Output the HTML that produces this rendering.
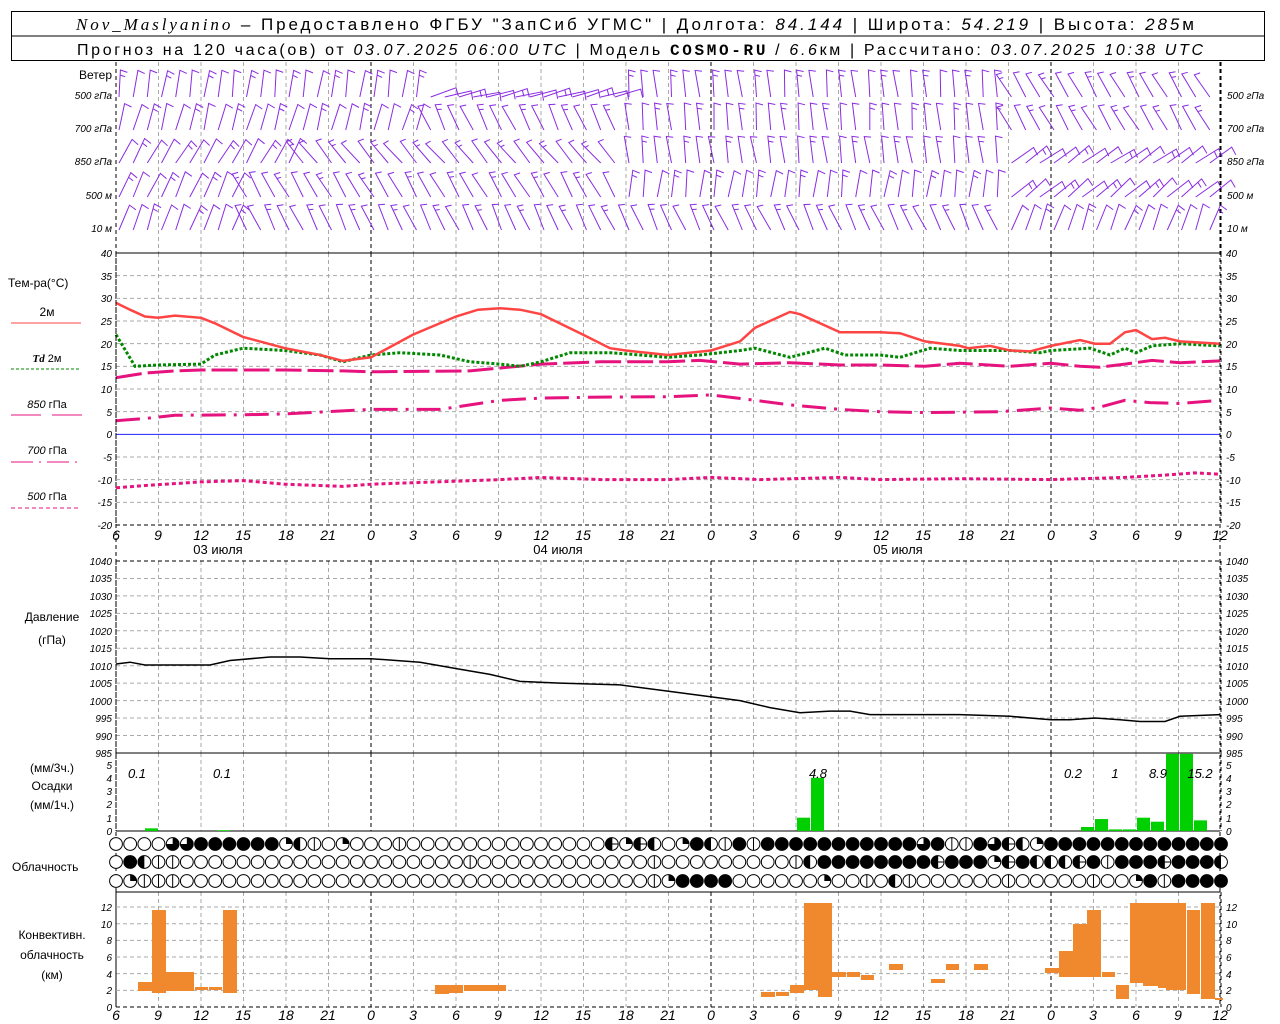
<!DOCTYPE html>
<html><head><meta charset="utf-8">
<style>
html,body{margin:0;padding:0;background:#fff;width:1280px;height:1024px;overflow:hidden}
svg{display:block}
text{font-family:"Liberation Sans",sans-serif;fill:#000}
.ax{font-size:10px;font-style:italic}
.hr{font-size:14px;font-style:italic;text-anchor:middle}
.lb{font-size:12px}
</style></head><body>
<svg id="s" width="1280" height="1024" viewBox="0 0 1280 1024" xmlns="http://www.w3.org/2000/svg">
<rect x="0" y="0" width="1280" height="1024" fill="#fff"/>
<g id="grid"></g>
<g id="plots"></g>
<!-- header -->
<rect x="11.5" y="11.5" width="1253" height="49" fill="none" stroke="#000"/>
<line x1="11" y1="36" x2="1265" y2="36" stroke="#000"/>
<text x="76" y="30" font-size="17" textLength="1118" lengthAdjust="spacing"><tspan font-family="Liberation Serif" font-style="italic">Nov_Maslyanino</tspan> – Предоставлено ФГБУ "ЗапСиб УГМС" | Долгота: <tspan font-style="italic">84.144</tspan> | Широта: <tspan font-style="italic">54.219</tspan> | Высота: <tspan font-style="italic">285</tspan>м</text>
<text x="77" y="55" font-size="16" textLength="1126" lengthAdjust="spacing">Прогноз на 120 часа(ов) от <tspan font-style="italic">03.07.2025 06:00 UTC</tspan>  | Модель <tspan font-family="Liberation Mono" font-weight="bold">COSMO-RU</tspan> / <tspan font-style="italic">6.6</tspan>км | Рассчитано: <tspan font-style="italic">03.07.2025 10:38 UTC</tspan></text>
<!-- wind labels -->
<text x="112" y="79" text-anchor="end" class="lb" font-size="11">Ветер</text>
<g class="ax" font-size="10">
<text x="112" y="99" text-anchor="end">500 гПа</text><text x="112" y="132" text-anchor="end">700 гПа</text><text x="112" y="165" text-anchor="end">850 гПа</text><text x="112" y="199" text-anchor="end">500 м</text><text x="112" y="232" text-anchor="end">10  м</text>
<text x="1227" y="99">500 гПа</text><text x="1227" y="132">700 гПа</text><text x="1227" y="165">850 гПа</text><text x="1227" y="199">500 м</text><text x="1227" y="232">10  м</text>
</g>
<!-- temp legend -->
<text x="8" y="287" class="lb">Тем-ра(°C)</text>
<text x="47" y="316" class="lb" text-anchor="middle" font-size="11">2м</text>
<line x1="11" y1="323" x2="81" y2="323" stroke="#f44" stroke-width="1"/>
<text x="47" y="362" text-anchor="middle" font-size="11"><tspan font-family="Liberation Serif" font-style="italic" font-weight="bold">Td</tspan>  2м</text>
<line x1="11" y1="369" x2="79" y2="369" stroke="#080" stroke-dasharray="3,2"/>
<text x="47" y="408" text-anchor="middle" font-size="11"><tspan font-style="italic">850</tspan> гПа</text>
<line x1="11" y1="415" x2="41" y2="415" stroke="#e6137f"/><line x1="52" y1="415" x2="82" y2="415" stroke="#e6137f"/>
<text x="47" y="454" text-anchor="middle" font-size="11"><tspan font-style="italic">700</tspan> гПа</text>
<line x1="11" y1="462" x2="78" y2="462" stroke="#e6137f" stroke-dasharray="22,6,2,6"/>
<text x="47" y="500" text-anchor="middle" font-size="11"><tspan font-style="italic">500</tspan> гПа</text>
<line x1="11" y1="508" x2="78" y2="508" stroke="#e6137f" stroke-dasharray="4,3"/>
<!-- other labels -->
<text x="52" y="621" text-anchor="middle" class="lb">Давление</text>
<text x="52" y="644" text-anchor="middle" class="lb">(гПа)</text>
<text x="52" y="772" text-anchor="middle" class="lb">(мм/3ч.)</text>
<text x="52" y="790" text-anchor="middle" class="lb">Осадки</text>
<text x="52" y="809" text-anchor="middle" class="lb">(мм/1ч.)</text>
<text x="12" y="871" class="lb">Облачность</text>
<text x="52" y="939" text-anchor="middle" class="lb">Конвективн.</text>
<text x="52" y="959" text-anchor="middle" class="lb">облачность</text>
<text x="52" y="979" text-anchor="middle" class="lb">(км)</text>
<!-- date labels -->
<text x="218" y="554" text-anchor="middle" font-size="13">03 июля</text>
<text x="558" y="554" text-anchor="middle" font-size="13">04 июля</text>
<text x="898" y="554" text-anchor="middle" font-size="13">05 июля</text>
<!-- hour labels -->
<g class="hr">
<text x="116" y="540">6</text><text x="158" y="540">9</text><text x="201" y="540">12</text><text x="243" y="540">15</text><text x="286" y="540">18</text><text x="328" y="540">21</text><text x="371" y="540">0</text><text x="413" y="540">3</text><text x="456" y="540">6</text><text x="498" y="540">9</text><text x="541" y="540">12</text><text x="583" y="540">15</text><text x="626" y="540">18</text><text x="668" y="540">21</text><text x="711" y="540">0</text><text x="753" y="540">3</text><text x="796" y="540">6</text><text x="838" y="540">9</text><text x="881" y="540">12</text><text x="923" y="540">15</text><text x="966" y="540">18</text><text x="1008" y="540">21</text><text x="1051" y="540">0</text><text x="1093" y="540">3</text><text x="1136" y="540">6</text><text x="1178" y="540">9</text><text x="1220" y="540">12</text>
</g>
<g class="hr">
<text x="116" y="1020">6</text><text x="158" y="1020">9</text><text x="201" y="1020">12</text><text x="243" y="1020">15</text><text x="286" y="1020">18</text><text x="328" y="1020">21</text><text x="371" y="1020">0</text><text x="413" y="1020">3</text><text x="456" y="1020">6</text><text x="498" y="1020">9</text><text x="541" y="1020">12</text><text x="583" y="1020">15</text><text x="626" y="1020">18</text><text x="668" y="1020">21</text><text x="711" y="1020">0</text><text x="753" y="1020">3</text><text x="796" y="1020">6</text><text x="838" y="1020">9</text><text x="881" y="1020">12</text><text x="923" y="1020">15</text><text x="966" y="1020">18</text><text x="1008" y="1020">21</text><text x="1051" y="1020">0</text><text x="1093" y="1020">3</text><text x="1136" y="1020">6</text><text x="1178" y="1020">9</text><text x="1220" y="1020">12</text>
</g>
<g class="ax">
<text x="112" y="257" text-anchor="end">40</text><text x="112" y="280" text-anchor="end">35</text><text x="112" y="302" text-anchor="end">30</text><text x="112" y="325" text-anchor="end">25</text><text x="112" y="348" text-anchor="end">20</text><text x="112" y="370" text-anchor="end">15</text><text x="112" y="393" text-anchor="end">10</text><text x="112" y="416" text-anchor="end">5</text><text x="112" y="438" text-anchor="end">0</text><text x="112" y="461" text-anchor="end">-5</text><text x="112" y="484" text-anchor="end">-10</text><text x="112" y="506" text-anchor="end">-15</text><text x="112" y="529" text-anchor="end">-20</text>
<text x="1226" y="257">40</text><text x="1226" y="280">35</text><text x="1226" y="302">30</text><text x="1226" y="325">25</text><text x="1226" y="348">20</text><text x="1226" y="370">15</text><text x="1226" y="393">10</text><text x="1226" y="416">5</text><text x="1226" y="438">0</text><text x="1226" y="461">-5</text><text x="1226" y="484">-10</text><text x="1226" y="506">-15</text><text x="1226" y="529">-20</text>
<text x="112" y="565" text-anchor="end">1040</text><text x="112" y="582" text-anchor="end">1035</text><text x="112" y="600" text-anchor="end">1030</text><text x="112" y="617" text-anchor="end">1025</text><text x="112" y="635" text-anchor="end">1020</text><text x="112" y="652" text-anchor="end">1015</text><text x="112" y="670" text-anchor="end">1010</text><text x="112" y="687" text-anchor="end">1005</text><text x="112" y="705" text-anchor="end">1000</text><text x="112" y="722" text-anchor="end">995</text><text x="112" y="740" text-anchor="end">990</text><text x="112" y="757" text-anchor="end">985</text>
<text x="1226" y="565">1040</text><text x="1226" y="582">1035</text><text x="1226" y="600">1030</text><text x="1226" y="617">1025</text><text x="1226" y="635">1020</text><text x="1226" y="652">1015</text><text x="1226" y="670">1010</text><text x="1226" y="687">1005</text><text x="1226" y="705">1000</text><text x="1226" y="722">995</text><text x="1226" y="740">990</text><text x="1226" y="757">985</text>
<text x="112" y="769" text-anchor="end">5</text><text x="112" y="782" text-anchor="end">4</text><text x="112" y="795" text-anchor="end">3</text><text x="112" y="808" text-anchor="end">2</text><text x="112" y="822" text-anchor="end">1</text><text x="112" y="835" text-anchor="end">0</text>
<text x="1226" y="769">5</text><text x="1226" y="782">4</text><text x="1226" y="795">3</text><text x="1226" y="808">2</text><text x="1226" y="822">1</text><text x="1226" y="835">0</text>
<text x="112" y="911" text-anchor="end">12</text><text x="112" y="928" text-anchor="end">10</text><text x="112" y="944" text-anchor="end">8</text><text x="112" y="961" text-anchor="end">6</text><text x="112" y="978" text-anchor="end">4</text><text x="112" y="994" text-anchor="end">2</text><text x="112" y="1011" text-anchor="end">0</text>
<text x="1226" y="911">12</text><text x="1226" y="928">10</text><text x="1226" y="944">8</text><text x="1226" y="961">6</text><text x="1226" y="978">4</text><text x="1226" y="994">2</text><text x="1226" y="1011">0</text>
</g>
<g font-size="13" font-style="italic">
<text x="137" y="778" text-anchor="middle">0.1</text><text x="222" y="778" text-anchor="middle">0.1</text><text x="818" y="778" text-anchor="middle">4.8</text><text x="1073" y="778" text-anchor="middle">0.2</text><text x="1115" y="778" text-anchor="middle">1</text><text x="1158" y="778" text-anchor="middle">8.9</text><text x="1200" y="778" text-anchor="middle">15.2</text>
</g>
<g id="clouds"></g>
</svg>
<script>
(function(){
var NS="http://www.w3.org/2000/svg";
function el(p,t,a){var e=document.createElementNS(NS,t);for(var k in a)e.setAttribute(k,a[k]);p.appendChild(e);return e;}
var G=document.getElementById("grid"),P=document.getElementById("plots"),C=document.getElementById("clouds");
function X(h){return 116+h*14.1667;}
var segs=[[62,253],[253,525],[561,753],[753,831],[892,1007]];
for(var h=0;h<=78;h+=3){var x=X(h);var day=(h==18||h==42||h==66||h==0||h==78);
 segs.forEach(function(s){el(G,"line",{x1:x,y1:s[0],x2:x,y2:s[1],stroke:day?"#000":"#aaa","stroke-dasharray":"4,3","stroke-width":1});});}
function hline(y,c,d){el(G,"line",{x1:116,y1:y,x2:1220,y2:y,stroke:c,"stroke-dasharray":d||"none"});}
for(var v=35;v>=-20;v-=5){hline(253+(40-v)*4.533,v==0?"#22f":"#aaa",v==0?"none":"4,3");}
for(var p=1035;p>985;p-=5){hline(561+(1040-p)*3.49,"#aaa","4,3");}
for(var k=0;k<=12;k+=2){hline(1007-k*8.33,"#aaa","4,3");}
hline(253,"#000");hline(525,"#000","4,3");hline(561,"#000","4,3");hline(753,"#000");hline(831,"#000");hline(892,"#000");hline(1007,"#000","4,3");
function curve(pts,f,attrs){var d=pts.map(function(q){return q[0]+","+f(q[1]).toFixed(1);}).join(" ");attrs.points=d;attrs.fill="none";el(P,"polyline",attrs);}
function TY(t){return 253+(40-t)*4.533;}
curve([[116,12.5],[145,13.5],[175,14],[201,14.2],[285,14.2],[343,14],[371,13.8],[470,14],[541,15.5],[600,16],[668,16],[700,16.3],[740,15.5],[790,15.8],[840,15.3],[880,15.3],[925,15],[960,15.7],[1010,15],[1051,15.7],[1080,15],[1100,14.8],[1125,15.5],[1152,16.3],[1180,15.8],[1220,16.2]],TY,{stroke:"#e6137f","stroke-width":3,"stroke-dasharray":"26,6"});
curve([[116,3],[145,3.5],[175,4.2],[243,4.3],[285,4.5],[371,5.5],[440,5.5],[470,6.5],[500,7.5],[541,8],[600,8.2],[668,8.3],[711,8.7],[755,7.5],[790,6.5],[840,5.5],[880,5],[925,4.8],[1000,5],[1051,5.8],[1080,5.3],[1100,6],[1125,7.5],[1150,7],[1180,6.8],[1220,7.5]],TY,{stroke:"#e6137f","stroke-width":3,"stroke-dasharray":"24,8,3,8"});
curve([[116,-11.8],[145,-11.3],[201,-10.5],[243,-10.2],[285,-11],[343,-11.5],[371,-11],[500,-10],[541,-9.5],[600,-10],[668,-10],[711,-9.5],[760,-10],[840,-9.5],[880,-10],[960,-9.8],[1051,-10],[1125,-9.5],[1165,-9],[1195,-8.5],[1220,-8.8]],TY,{stroke:"#e6137f","stroke-width":3,"stroke-dasharray":"4,3"});
curve([[116,22],[135,15],[158,15.3],[201,15.5],[215,17.5],[243,19],[285,18.5],[320,17.5],[343,16],[371,17.5],[400,18],[440,17.5],[470,16],[500,15.5],[520,15],[541,16],[570,18],[610,18],[640,17.5],[668,17],[700,17.5],[740,18.5],[755,19],[790,17],[825,19],[845,17.5],[880,17.5],[900,17],[930,19],[960,18.5],[1010,18.5],[1040,18],[1051,18.5],[1090,19],[1110,17.5],[1125,19],[1136,18],[1152,19.5],[1180,20],[1220,19.5]],TY,{stroke:"#080","stroke-width":3,"stroke-dasharray":"3,2"});
curve([[116,29],[130,27.5],[145,26],[158,25.7],[175,26.2],[201,25.7],[215,24.5],[243,21.5],[285,19],[320,17.5],[343,16.2],[371,17],[413,22],[456,26],[478,27.5],[500,27.8],[520,27.5],[541,26.5],[583,22],[610,19],[626,18.5],[668,17.5],[711,18.5],[740,20.5],[755,23.5],[790,27],[800,26.5],[840,22.5],[880,22.5],[900,22.3],[925,20.5],[960,19.5],[968,19],[990,19.5],[1010,18.5],[1030,18.3],[1051,19.5],[1080,20.8],[1095,20],[1110,20],[1125,22.5],[1136,23],[1152,21],[1165,21.3],[1180,20.5],[1220,20]],TY,{stroke:"#f44","stroke-width":2.5});
curve([[116,1010.5],[130,1011],[145,1010.2],[210,1010.2],[230,1011.5],[270,1012.5],[300,1012.5],[330,1012],[371,1012],[420,1011],[460,1009],[490,1007.5],[520,1005.5],[560,1005],[620,1004.5],[660,1003],[700,1001.5],[740,1000],[770,998],[800,996.5],[830,997],[850,997],[870,996],[920,996],[960,996],[1010,995.5],[1051,994.5],[1070,994.5],[1095,995],[1120,994.5],[1140,994],[1165,994],[1180,995.5],[1220,996]],function(p){return 561+(1040-p)*3.49;},{stroke:"#000","stroke-width":1.5});
[[145,158,0.2],[217,230,0.06],[797,810,1.0],[811,824,4.0],[1081,1094,0.3],[1095,1108,0.9],[1109,1122,0.12],[1123,1136,0.12],[1137,1150,1.0],[1151,1164,0.7],[1166,1179,5.8],[1180,1193,5.8],[1194,1207,0.8]].forEach(function(b){var h=Math.min(b[2]*13.3,78);el(P,"rect",{x:b[0],y:831-h,width:b[1]-b[0],height:h,fill:"#00d000"});});
[[138,152,982,991],[152,166,910,993],[166,194,972,991],[195,208,987,990],[209,222,987,990],[223,237,910,993],[435,449,985,994],[449,463,985,993],[464,506,985,991],
[761,775,992,997],[776,789,992,996],[790,804,985,993],[804,818,903,990],[818,832,903,997],[832,846,972,977],[847,860,972,977],[861,874,975,980],[889,903,964,970],[931,945,979,983],[946,959,964,970],[974,988,964,970],
[1045,1059,968,973],[1059,1073,951,977],[1073,1087,924,977],[1087,1101,910,977],[1102,1115,972,977],[1116,1129,985,999],[1130,1143,903,983],[1143,1158,903,986],[1158,1166,903,988],[1166,1179,903,990],[1179,1186,903,990],[1187,1200,910,994],[1201,1215,903,999],[1215,1223,998,1000]].forEach(function(b){el(P,"rect",{x:b[0],y:b[2],width:b[1]-b[0],height:b[3]-b[2],fill:"#f0892e"});});
var rows=["oooottffffffqh|oqooo|oooooooooooooo+q+hoqfh|f|ffffffffffftf||ft+hqffffffffffffff",
"ofh||oooooooooooooooooooo|oooooooooooo|ooooooooo|hffffffff+fffq+fhhh+f|fff+fffh",
"oq|||ooooooooooooooooooooooooooooooooo|qffffooooooqoo|oh|oooooo|ooooo|ooqf|ffff"];
var rys=[844,862,881],r=6.4;
rows.forEach(function(s,ri){var cy=rys[ri];for(var i=0;i<79;i++){var c=s.charAt(i)||"o";var cx=X(i);
 el(C,"circle",{cx:cx,cy:cy,r:r,fill:c=="f"?"#000":"#fff",stroke:"#000","stroke-width":1});
 if(c=="q")el(C,"path",{d:"M"+cx+","+cy+"V"+(cy-r)+"A"+r+","+r+" 0 0 1 "+(cx+r)+","+cy+"Z",fill:"#000"});
 if(c=="t")el(C,"path",{d:"M"+cx+","+cy+"H"+(cx-r)+"A"+r+","+r+" 0 1 0 "+cx+","+(cy-r)+"Z",fill:"#000"});
 if(c=="h"||c=="+")el(C,"path",{d:"M"+cx+","+(cy-r)+"A"+r+","+r+" 0 0 0 "+cx+","+(cy+r)+"Z",fill:"#000"});
 if(c=="|"||c=="+")el(C,"line",{x1:cx,y1:cy-r,x2:cx,y2:cy+r,stroke:"#000"});
 if(c=="+")el(C,"line",{x1:cx-r,y1:cy,x2:cx+r,y2:cy,stroke:"#000"});
}});
var W=el(P,"g",{stroke:"#8a2be2","stroke-width":1,fill:"none"});
var bases=[97,130,163,197,230];
function ang(ri,x){
 if(ri==0){if(x<420)return 8;if(x<620)return 75;if(x<1010)return -6;return -30;}
 if(ri==1){if(x<420)return 15;if(x<620)return -25;if(x<1010)return -5;return -30;}
 if(ri==2){if(x<300)return 30;if(x<620)return -40;if(x<1000)return -8;return 55;}
 if(ri==3){if(x<240)return 25;if(x<620)return -30;if(x<1000)return 8;return 50;}
 if(x<240)return 20;if(x<1000)return -25;return 20;}
bases.forEach(function(yb,ri){for(var i=0;i<78;i++){var x=X(i)+3;var a=(ang(ri,x)+((i*7+ri*13)%11-5))*Math.PI/180;var L=27;
 var x2=x+Math.sin(a)*L,y2=yb-Math.cos(a)*L;
 var fx=x2+Math.cos(a)*7,fy=y2+Math.sin(a)*7+2;
 var d="M"+x.toFixed(1)+","+yb+"L"+x2.toFixed(1)+","+y2.toFixed(1)+"L"+fx.toFixed(1)+","+fy.toFixed(1);
 if((i+ri)%3==0){var mx=x2-Math.sin(a)*5,my=y2+Math.cos(a)*5;d+="M"+mx.toFixed(1)+","+my.toFixed(1)+"l"+(Math.cos(a)*5).toFixed(1)+","+(Math.sin(a)*5+1.5).toFixed(1);}
 el(W,"path",{d:d});}});
el(P,"line",{x1:116,y1:62,x2:116,y2:1007,stroke:"#000","stroke-dasharray":"4,3"});
el(P,"line",{x1:1220,y1:62,x2:1220,y2:1007,stroke:"#000","stroke-dasharray":"4,3"});
})();
</script>
</body></html>
